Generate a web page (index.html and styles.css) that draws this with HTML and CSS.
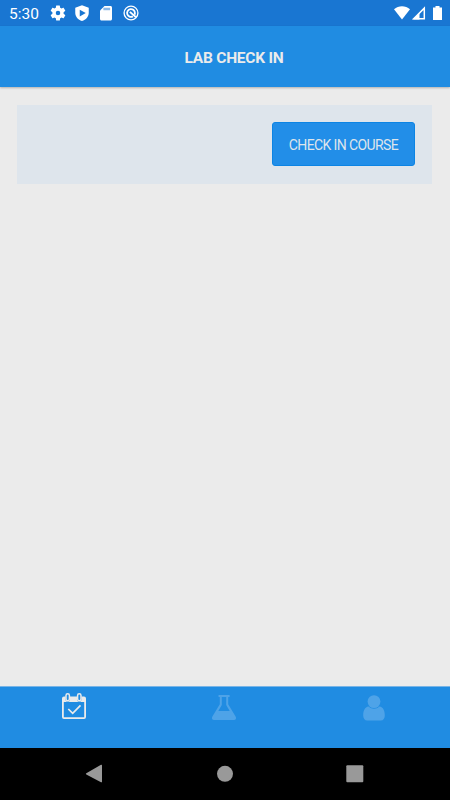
FILE: index.html
```html
<!DOCTYPE html>
<html lang="en">
<head>
    <meta charset="UTF-8">
    <meta name="viewport" content="width=device-width, initial-scale=1.0">
    <title>Lab Check In</title>
    <link rel="stylesheet" href="styles.css">
</head>
<body>
    <div class="status-bar">
        <span class="time">5:30</span>
        <div class="notifications">
            <!-- settings -->
            <svg width="18" height="18" viewBox="0 0 24 24"><path fill="#fff" d="M19.4 13c0-.3.1-.6.1-1s0-.7-.1-1l2.100-1.650c.2-.15.25-.4.120-.640l-2-3.460c-.120-.220-.390-.3-.610-.220l-2.490 1c-.520-.4-1.080-.730-1.690-.980l-.380-2.650A.49.49 0 0 0 14 2h-4c-.25 0-.46.18-.49.42l-.38 2.650c-.61.25-1.170.59-1.690.98l-2.490-1c-.23-.09-.49 0-.61.22l-2 3.460c-.13.22-.07.49.12.64L4.570 11c-.04.3-.07.65-.07 1s.03.7.07 1l-2.110 1.650c-.19.15-.24.42-.12.64l2 3.460c.12.22.39.3.61.22l2.490-1c.52.4 1.080.73 1.690.98l.38 2.650c.03.24.24.42.49.42h4c.25 0 .46-.18.49-.42l.38-2.650c.61-.25 1.170-.59 1.690-.98l2.490 1c.23.09.49 0 .61-.22l2-3.460c.12-.22.07-.49-.12-.64L19.400 13zM12 15a3 3 0 1 1 0-6 3 3 0 0 1 0 6z"/></svg>
            <!-- play protect -->
            <svg width="18" height="18" viewBox="0 0 24 24"><path fill="#fff" fill-rule="evenodd" d="M12 1.500L3 5v6.500c0 5.200 3.800 9.700 9 11 5.200-1.300 9-5.800 9-11V5zM9 7.500l8 4.500-8 4.500z"/></svg>
            <!-- sd card -->
            <svg width="18" height="18" viewBox="0 0 24 24"><path fill="#fff" d="M18 2.500h-8l-6 6V20c0 1.100.9 2 2 2h12c1.100 0 2-.9 2-2V4.500c0-1.100-.9-2-2-2z"/><path fill="#8bb9e8" d="M8.500 5h9v3.300h-9z"/></svg>
            <svg width="18" height="18" viewBox="0 0 24 24" fill="none" stroke="#fff"><circle cx="12" cy="12" r="9.200" stroke-width="1.800"/><path stroke-width="2.400" d="M14.500 16.500A5.200 5.200 0 1 1 17.200 12c0 1-.2 1.700-.6 2.400"/><path stroke-width="2.400" d="M10.500 10.500l8.200 7.200"/></svg>
        </div>
        <div class="signals">
            <svg width="16" height="14" viewBox="0 0 16 14"><path fill="#fff" d="M0 3.200C4.500-.7 11.500-.7 16 3.200L8 13.500z"/></svg>
            <svg width="14" height="14" viewBox="0 0 14 14"><path fill="none" stroke="#fff" stroke-width="1.500" d="M1.700 12.700L12.300 2.100v10.600z"/><path fill="#fff" d="M1 13.400l6.500-6.500v6.500z"/></svg>
            <svg class="battery" width="9" height="14" viewBox="0 0 9 14"><path fill="#fff" d="M2.500 0h4v1.500H9V14H0V1.500h2.500z"/></svg>
        </div>
    </div>

    <header class="header">
        <h1>LAB CHECK IN</h1>
    </header>

    <main class="content">
        <div class="card">
            <button class="check-in-btn">CHECK IN COURSE</button>
        </div>
    </main>

    <nav class="tab-bar">
        <a class="tab active">
            <svg width="26" height="28" viewBox="0 0 26 28"><path fill="currentColor" fill-rule="evenodd" d="M3 3.500h1.500v3a2.200 2.200 0 0 0 4.400 0v-3h7.200v3a2.200 2.200 0 0 0 4.400 0v-3H23a2 2 0 0 1 2 2V24a2 2 0 0 1-2 2H3a2 2 0 0 1-2-2V5.500a2 2 0 0 1 2-2zM2.800 9v15.200h20.400V9z"/><rect x="5" y=".8" width="3.400" height="7" rx="1.700" fill="none" stroke="currentColor" stroke-width="1.500"/><rect x="16.600" y=".8" width="3.400" height="7" rx="1.700" fill="none" stroke="currentColor" stroke-width="1.500"/><path fill="none" stroke="currentColor" stroke-width="1.700" d="M7.300 16l4.400 4.400 7.800-8"/></svg>
        </a>
        <a class="tab">
            <svg width="26" height="28" viewBox="0 0 26 28"><path fill="currentColor" fill-rule="evenodd" d="M8.500 2h9.400a1 1 0 0 1 0 2h-.7v7.300l7.400 12.200c1 1.700.2 3.500-1.700 3.500H3.100c-1.900 0-2.700-1.800-1.700-3.500l7.400-12.200V4h-.7a1 1 0 0 1 .4-2zm2.300 2v8L7.300 18h11.400l-3.500-6V4z"/></svg>
        </a>
        <a class="tab">
            <svg width="26" height="28" viewBox="0 0 26 28"><circle cx="13" cy="8.600" r="6.400" fill="currentColor"/><path fill="currentColor" d="M7.600 13.600c3.200 2.900 7.600 2.900 10.800 0 3.900.5 5.400 4.300 5.400 8.800 0 2.900-1.500 5-4 5H6.200c-2.500 0-4-2.100-4-5 0-4.500 1.500-8.300 5.400-8.800z"/></svg>
        </a>
    </nav>

    <div class="system-nav">
        <svg width="18" height="20" viewBox="0 0 18 20"><path fill="#999" d="M1.300 9.300L16 .8q1-.4 1 .6v16.300q0 1-1 .5L1.300 10.400q-.9-.6 0-1.100z"/></svg>
        <svg width="18" height="20" viewBox="0 0 18 20"><circle cx="9" cy="9.800" r="8" fill="#999"/></svg>
        <svg width="18" height="20" viewBox="0 0 18 20"><rect x=".3" y="1.200" width="17" height="17" rx="1" fill="#999"/></svg>
    </div>
</body>
</html>
```
FILE: styles.css
```css
* {
    box-sizing: border-box;
}
body {
    display: flex;
    flex-direction: column;
    height: 100vh;
    margin: 0;
    background-color: #ebebeb;
    font-family: Roboto, Arial, sans-serif;
    overflow: hidden;
}
svg {
    display: block;
    flex-shrink: 0;
}
.status-bar {
    display: flex;
    align-items: center;
    height: 26px;
    padding: 0 8px 0 9px;
    background-color: #1976d2;
    color: #fff;
}
.time {
    width: 40px;
    padding-top: 2px;
    font-size: 15.5px;
    line-height: 18px;
}
.notifications {
    display: flex;
    gap: 6.2px;
}
.signals {
    display: flex;
    gap: 2px;
    margin-left: auto;
}
.battery {
    margin-left: 5px;
}
.header {
    display: flex;
    align-items: center;
    justify-content: center;
    height: 61px;
    padding-left: 18px;
    background-color: #208ce2;
    box-shadow: 0 1px 2px rgba(0, 0, 0, 0.25);
}
h1 {
    margin: 2px 0 0;
    color: #ebebeb;
    font-size: 15.5px;
    font-weight: 700;
    letter-spacing: -0.25px;
}
.content {
    flex: 1;
    padding: 18px 18px 18px 17px;
}
.card {
    display: flex;
    align-items: center;
    justify-content: flex-end;
    height: 79px;
    padding-right: 17px;
    background-color: #dee5ec;
}
.check-in-btn {
    width: 143px;
    height: 44px;
    margin-top: -1px;
    padding: 1px 0 0;
    border: 1px solid #0c84e4;
    border-radius: 3px;
    background-color: #228ee8;
    color: #dee5ec;
    font-family: inherit;
    font-size: 14px;
    letter-spacing: -0.6px;
}
.tab-bar {
    display: flex;
    height: 62px;
    border-top: 1px solid #78b4e6;
    background-color: #208ce2;
}
.tab {
    display: flex;
    flex: 1;
    justify-content: center;
    padding: 6px 2px 0 0;
    color: #4ea3e8;
}
.tab.active {
    color: #ebebeb;
}
.system-nav {
    display: flex;
    align-items: center;
    justify-content: space-between;
    height: 52px;
    padding: 0 86px 0 85px;
    background-color: #000;
}
```
